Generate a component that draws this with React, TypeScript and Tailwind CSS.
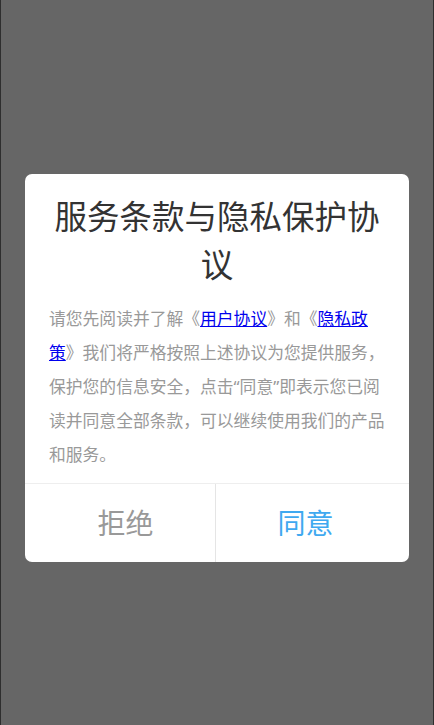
export default function App() {
  return (
    <div
      className="flex min-h-screen items-center justify-center border-x border-[#2e2e2e] bg-[#666666] pt-[10px]"
      style={{ fontFamily: '"Noto Sans", "Noto Sans CJK SC", sans-serif' }}
    >
      {/* Dialog */}
      <div className="w-[384px] overflow-hidden rounded-[7px] bg-white">
        <h1 className="px-6 pt-[19px] text-center text-[32.5px] leading-[48px] font-normal text-[#333333]">
          服务条款与隐私保护协议
        </h1>
        <p className="mt-[13px] pl-6 pr-[21px] text-[16.8px] leading-[34px] text-[#999999]">
          请您先阅读并了解《
          <a href="#" className="text-[#0000ee] underline">
            用户协议
          </a>
          》和《
          <a href="#" className="text-[#0000ee] underline">
            隐私政策
          </a>
          》我们将严格按照上述协议为您提供服务，保护您的信息安全，点击“同意”即表示您已阅读并同意全部条款，可以继续使用我们的产品和服务。
        </p>
        <div className="mt-[11px] flex border-t border-[#eeeeee]">
          <button className="h-[78px] flex-1 border-r border-[#e5e5e5] pl-[11px] text-[28px] text-[#999999]">
            拒绝
          </button>
          <button className="h-[78px] flex-1 pr-[14px] text-[28px] text-[#3fa9f0]">同意</button>
        </div>
      </div>
    </div>
  )
}
